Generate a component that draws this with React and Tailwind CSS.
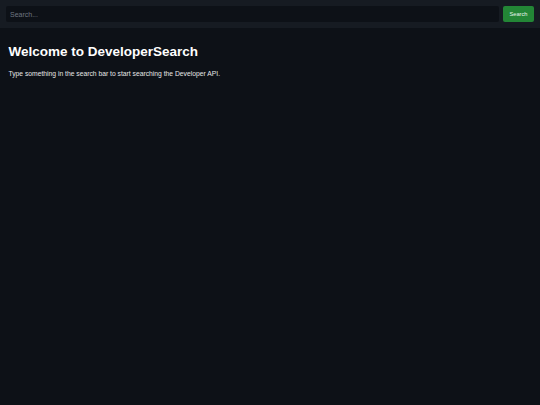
import React, { useState } from 'react';

export default function App() {
  const [query, setQuery] = useState('');

  return (
    <div className="min-h-screen bg-[#0d1117] text-white" style={{ fontFamily: '"Liberation Sans", Arial, sans-serif' }}>
      <header className="flex items-center gap-[4px] bg-[#161b22] p-[6px] h-[28px]">
        <input
          value={query}
          onChange={(e) => setQuery(e.target.value)}
          placeholder="Search..."
          className="flex-1 h-[16px] rounded-[2px] bg-[#0d1117] px-[4px] text-[7px] text-[#c9d1d9] placeholder-[#6e7681] outline-none"
        />
        <button className="h-[16px] w-[31px] rounded-[2px] bg-[#238636] text-[5.7px] font-normal text-[#e6f4ea]">
          Search
        </button>
      </header>

      <main className="px-[8.4px] pt-[16px]">
        <h1 className="text-[13.5px] leading-[16px] font-bold">Welcome to DeveloperSearch</h1>
        <p className="mt-[10px] text-[6.75px] leading-[8px] text-[#e6e6e6]">
          Type something in the search bar to start searching the Developer API.
        </p>
      </main>
    </div>
  );
}
